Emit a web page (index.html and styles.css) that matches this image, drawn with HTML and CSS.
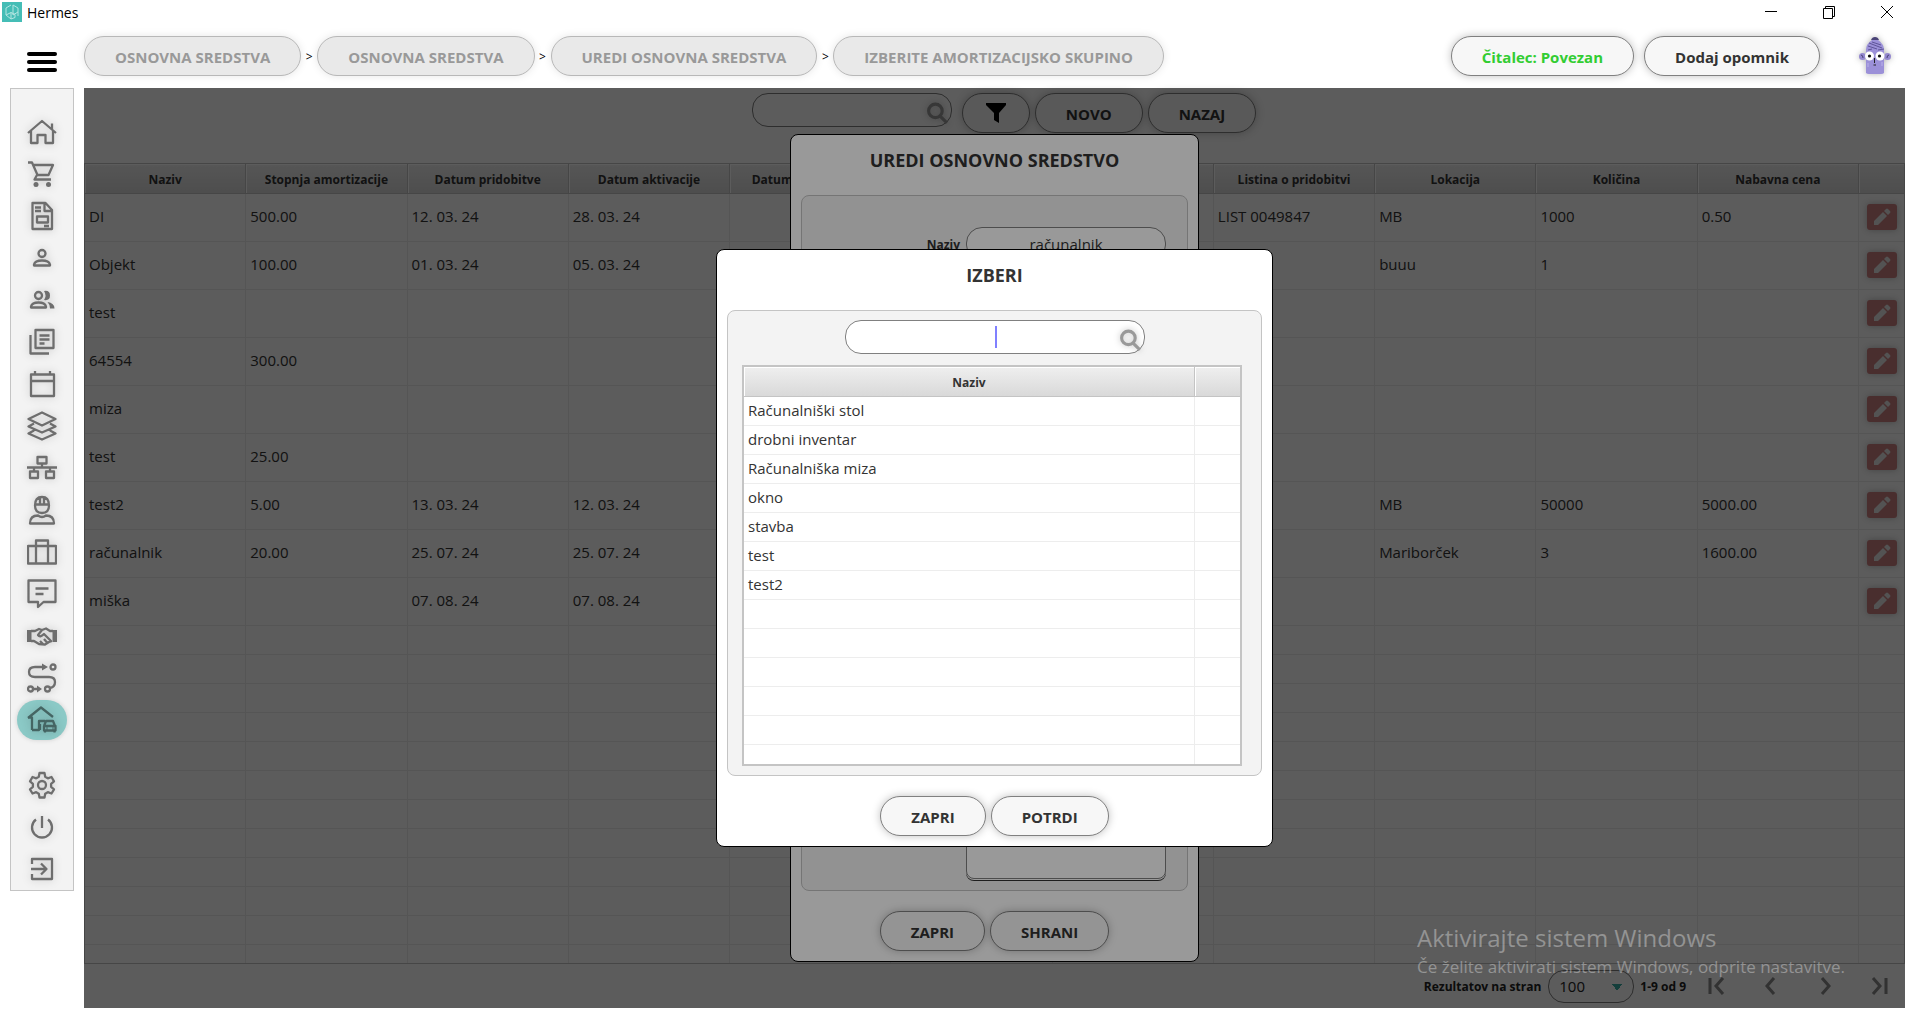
FILE: index.html
```html
<!DOCTYPE html>
<html lang="sl">
<head>
  <meta charset="UTF-8">
  <title>Hermes</title>
  <link rel="stylesheet" href="styles.css">
</head>
<body>

<header class="titlebar">
  <svg class="app-logo" viewBox="0 0 20 20">
    <rect width="20" height="20" fill="#45bdb6"/>
    <path d="M9 3L4 6v7l5 4V10.500L4 13M11 3l5 3v8M11 3v10l5-3M9 10.500l4 2v3l-4 1.500" fill="none" stroke="#b4e6e2" stroke-width="1"/>
  </svg>
  <span class="app-name">Hermes</span>
  <div class="window-buttons">
    <button aria-label="Pomanjšaj"><svg viewBox="0 0 14 14"><path d="M1 6.500h12"/></svg></button>
    <button aria-label="Obnovi"><svg viewBox="0 0 14 14"><path d="M1.500 3.500h9v10h-9zM3.500 3.500v-2h9v10h-2"/></svg></button>
    <button aria-label="Zapri okno"><svg viewBox="0 0 14 14"><path d="M1 1l12 12M13 1L1 13"/></svg></button>
  </div>
</header>

<div class="topbar">
  <button class="menu-toggle" aria-label="Meni"><span></span><span></span><span></span></button>
  <nav class="breadcrumbs">
    <button class="pill" disabled>OSNOVNA SREDSTVA</button>
    <span>&gt;</span>
    <button class="pill" disabled>OSNOVNA SREDSTVA</button>
    <span>&gt;</span>
    <button class="pill" disabled>UREDI OSNOVNA SREDSTVA</button>
    <span>&gt;</span>
    <button class="pill" disabled>IZBERITE AMORTIZACIJSKO SKUPINO</button>
  </nav>
  <div class="top-actions">
    <button class="pill connected">Čitalec: Povezan</button>
    <button class="pill">Dodaj opomnik</button>
    <button class="avatar" aria-label="Uporabnik">
      <svg viewBox="0 0 32 38">
        <circle cx="3.500" cy="19.500" r="3.500" fill="#9488cf"/>
        <circle cx="28.500" cy="19.500" r="3.500" fill="#9488cf"/>
        <path d="M2 18q2 0 2 3M30 18q-2 0-2 3" fill="none" stroke="#4a4377"/>
        <path d="M7 36V13q0-6 6-10h6q6 4 6 10v23q-1 1-3 1H10q-2 0-3-1z" fill="#9b90d8"/>
        <path d="M12 3q1-3 4-3t4 3z" fill="#4a4377"/>
        <path d="M10 6l13 5M9 9l9 3M13 5l9 3M19 13l6-1M9 13l4-1" stroke="#5f5599" stroke-width="1"/>
        <circle cx="10.500" cy="19" r="4.500" fill="#fff"/>
        <circle cx="21" cy="19" r="4.500" fill="#fff"/>
        <circle cx="10.500" cy="19" r="1.600" fill="#111"/>
        <circle cx="20.500" cy="19" r="1.600" fill="#111"/>
        <path d="M15.500 21v5M14.500 28h2.500" stroke="#222" stroke-width="1"/>
        <path d="M9 26v4M23 25v4" stroke="#b9b0ea" stroke-width="1"/>
      </svg>
    </button>
  </div>
</div>

<div class="layout">
  <nav class="sidebar">
    <a href="#" aria-label="Domov"><svg viewBox="0 0 30 30"><path d="M1 16L15 4l14 12M4 14v12h6.500v-8h8v8H26V14M25 12V6.500"/></svg></a>
    <a href="#" aria-label="Prodaja"><svg viewBox="0 0 30 30"><path d="M1 3.500h4l5.500 12.500h11L26 6H6.500M10 16l-2.500 4.500H24"/><circle class="solid" cx="9" cy="25.500" r="2.500"/><circle class="solid" cx="21.500" cy="25.500" r="2.500"/></svg></a>
    <a href="#" aria-label="Dokumenti"><svg viewBox="0 0 30 30"><path d="M5.500 2h13l6.500 7v19H5.500zM17.500 2v8H25M8 6.500h6M8 10h6M10 15.500h11v6H10zM17 25h5"/></svg></a>
    <a href="#" aria-label="Stranka"><svg viewBox="0 0 30 30"><circle cx="15" cy="10.500" r="3.500"/><path d="M7 22.500v-1q1-4 8-4t8 4v1z"/></svg></a>
    <a href="#" aria-label="Stranke"><svg viewBox="0 0 30 30"><circle cx="11.500" cy="10.500" r="3.500"/><path d="M4 22.500v-1q1-4 7.500-4t7.500 4v1z"/><path class="solid" d="M17 6q6-1 6 4.500T17 15q3-4.500 0-9zM20.500 17q7 1 7 6.500H23q0-4-2.500-6.500z"/></svg></a>
    <a href="#" aria-label="Katalog"><svg viewBox="0 0 30 30"><path d="M8.500 3h18v18h-18zM3.500 8v18.500H22M12.500 8.500h10M12.500 12.500h10M12.500 16.500h5"/></svg></a>
    <a href="#" aria-label="Koledar"><svg viewBox="0 0 30 30"><path d="M4 5.500h23V27H4zM4 12h23M8 2v4M23 2v4"/></svg></a>
    <a href="#" aria-label="Zaloga"><svg viewBox="0 0 30 30"><path d="M15 1.500L28.500 8 15 14.500 1.500 8zM7 12.500l-5.500 3L15 21.500l13.500-6-5.500-3M7 19.500L1.500 22.500 15 28.500l13.500-6-5.500-3"/></svg></a>
    <a href="#" aria-label="Organizacija"><svg viewBox="0 0 30 30"><path d="M10.500 4h9v6.500h-9zM0 14.500h30M15 10.500v4M7 14.500v4M23 14.500v4M3 18.500h8v6.500H3zM19 18.500h8v6.500h-8z"/></svg></a>
    <a href="#" aria-label="Delavci"><svg viewBox="0 0 30 30"><path d="M8 10.500q0-8.500 7-8.500t7 8.500q0 7.500-7 7.500t-7-7.500zM7.500 9.500h15M13 3v6M17 3v6M3 28.500q0-8 8-8 4 3 8 0 8 0 8 8z"/></svg></a>
    <a href="#" aria-label="Potovanja"><svg viewBox="0 0 30 30"><path d="M1 9h28v17.500H1zM9 26.500V3.500h12v23"/></svg></a>
    <a href="#" aria-label="Sporočila"><svg viewBox="0 0 30 30"><path d="M1.500 1.500h27V23h-12L11 28v-5H1.500zM8.500 9.500h13M8.500 15h8"/></svg></a>
    <a href="#" aria-label="Partnerji"><svg viewBox="0 0 30 30"><path class="solid" d="M0 9h4.500v12H0zM25.500 9H30v12h-4.500z"/><path d="M4 10h4l4-2 3 1 4-1.500L23 10h3M4 20h3l5 3 6 .5 4-2.500 3-1M15 9l-4 5q2 3 6-1l7 7M13 20l3 3M17 18l3 3.500"/></svg></a>
    <a href="#" aria-label="Procesi"><svg viewBox="0 0 30 30"><path d="M18 4H8q-6 0-6 5t6 5h14q6 0 6 5t-5 6M6 26h6"/><circle cx="26" cy="4" r="2.500"/><circle cx="3.500" cy="26" r="2.500"/><circle cx="20.500" cy="26" r="2.500"/><path class="solid" d="M15 .5L21 4l-6 3.500zM10 22.500l5 3.500-5 3.500z"/></svg></a>
    <a href="#" class="active" aria-label="Osnovna sredstva"><svg viewBox="0 0 30 30"><path d="M1 13L14 2.500 26 12M1 12.500h4V25M5 25h7v-9h6M13 25v-6"/><path d="M17 21l2-5h7l2 5M17 21h11.500v4.500H17zM18 25.500v2M27.500 25.500v2M19.500 23h1M25.500 23h1"/></svg></a>
    <a href="#" class="settings" aria-label="Nastavitve"><svg viewBox="0 0 30 30"><path d="M12.500 3h5l.7 3.800 2.600 1.500 3.700-1.300 2.500 4.300-2.900 2.500v3l2.900 2.500-2.500 4.200-3.700-1.300-2.600 1.500-.7 3.800h-5l-.7-3.800-2.600-1.500-3.700 1.300L3 19.300l2.900-2.500v-3L3 11.300 5.500 7l3.700 1.300 2.600-1.500z"/><circle cx="15" cy="15" r="4"/></svg></a>
    <a href="#" aria-label="Izklop"><svg viewBox="0 0 30 30"><path d="M15 4v12M9 7.500A10 10 0 1 0 21 7.500"/></svg></a>
    <a href="#" aria-label="Odjava"><svg viewBox="0 0 30 30"><path d="M5 10V5h20v20H5v-5M4 15h14M14 9.500l5.500 5.500-5.500 5.500"/></svg></a>
  </nav>

  <main class="content">
    <div class="toolbar">
      <div class="search">
        <input type="text" aria-label="Iskanje">
        <svg viewBox="0 0 22 22"><circle cx="9" cy="8.500" r="6.500"/><path d="M13 13l7 7"/></svg>
      </div>
      <button class="pill filter" aria-label="Filter"><svg viewBox="0 0 20 20"><path d="M0 0h20v2l-7 8v10l-5-3v-7L0 2z"/></svg></button>
      <button class="pill">NOVO</button>
      <button class="pill">NAZAJ</button>
    </div>

    <div class="table-wrap">
      <table class="grid assets">
        <thead>
          <tr>
            <th>Naziv</th><th>Stopnja amortizacije</th><th>Datum pridobitve</th><th>Datum aktivacije</th><th>Datum deaktivacije</th><th>Dobavitelj</th><th>Inventarna</th><th>Listina o pridobitvi</th><th>Lokacija</th><th>Količina</th><th>Nabavna cena</th><th class="edit-col"></th>
          </tr>
        </thead>
        <tbody id="assets"></tbody>
      </table>
    </div>

    <footer class="pager">
      <label for="pageSize">Rezultatov na stran</label>
      <select id="pageSize"><option>100</option></select>
      <span>1-9 od 9</span>
      <button aria-label="Prva stran"><svg viewBox="0 0 18 18"><path d="M2 1v16M15 1L8 9l7 8"/></svg></button>
      <button aria-label="Prejšnja stran"><svg viewBox="0 0 18 18"><path d="M12 1L5 9l7 8"/></svg></button>
      <button aria-label="Naslednja stran"><svg viewBox="0 0 18 18"><path d="M6 1l7 8-7 8"/></svg></button>
      <button aria-label="Zadnja stran"><svg viewBox="0 0 18 18"><path d="M3 1l7 8-7 8M16 1v16"/></svg></button>
    </footer>

    <div class="backdrop">
      <section class="modal asset-modal">
        <h2>UREDI OSNOVNO SREDSTVO</h2>
        <form class="panel">
          <div class="field">
            <label for="assetName">Naziv</label>
            <input id="assetName" type="text" value="računalnik">
          </div>
          <div class="field">
            <textarea aria-label="Opombe"></textarea>
          </div>
        </form>
        <div class="modal-buttons">
          <button class="pill">ZAPRI</button>
          <button class="pill">SHRANI</button>
        </div>
      </section>
    </div>

    <div class="backdrop">
      <section class="modal pick-modal">
        <h2>IZBERI</h2>
        <div class="panel">
          <div class="search">
            <input type="text" aria-label="Iskanje skupine">
            <span class="caret"></span>
            <svg viewBox="0 0 22 22"><circle cx="9" cy="8.500" r="6.500"/><path d="M13 13l7 7"/></svg>
          </div>
          <div class="table-wrap">
            <table class="grid groups">
              <thead><tr><th>Naziv</th><th class="mark-col"></th></tr></thead>
              <tbody id="groups"></tbody>
            </table>
          </div>
        </div>
        <div class="modal-buttons">
          <button class="pill">ZAPRI</button>
          <button class="pill">POTRDI</button>
        </div>
      </section>
    </div>
  </main>
</div>

<div class="watermark">
  <p class="watermark-title">Aktivirajte sistem Windows</p>
  <p>Če želite aktivirati sistem Windows, odprite nastavitve.</p>
</div>

<script src="script.js"></script>
</body>
</html>
```
FILE: styles.css
```css
* {
  box-sizing: border-box;
}

body {
  margin: 0;
  height: 100vh;
  display: flex;
  flex-direction: column;
  overflow: hidden;
  background: #fff;
  color: #333;
  font-family: "Open Sans", "Noto Sans", sans-serif;
  font-size: 15px;
}

button, input, select, textarea {
  font: inherit;
  color: inherit;
}

button {
  padding: 0;
  border: none;
  background: none;
}

/* Title bar */
.titlebar {
  display: flex;
  align-items: center;
  height: 24px;
  padding: 0 26px 0 2px;
  color: #000;
}

.app-logo {
  width: 20px;
  height: 20px;
}

.app-name {
  margin-left: 5px;
  font-size: 14px;
}

.window-buttons {
  display: flex;
  gap: 44px;
  margin-left: auto;
}

.window-buttons button {
  display: flex;
}

.window-buttons svg {
  width: 14px;
  height: 14px;
  fill: none;
  stroke: #000;
  stroke-width: 1;
}

/* Top bar */
.topbar {
  display: flex;
  align-items: center;
  height: 64px;
  padding-right: 29px;
}

.menu-toggle {
  display: flex;
  flex-direction: column;
  gap: 4px;
  width: 30px;
  margin: 12px 27px 0 27px;
}

.menu-toggle span {
  height: 4px;
  border-radius: 2px;
  background: #000;
}

.pill {
  height: 40px;
  padding: 2px 30px 0;
  border: 1px solid #808080;
  border-radius: 20px;
  background: #f7f7f7;
  box-shadow: 0 0 8px rgba(0, 0, 0, 0.25);
  font-weight: bold;
  white-space: nowrap;
}

.pill:disabled {
  border-color: #b8b8b8;
  background: #e9e9e9;
  box-shadow: 0 0 8px rgba(0, 0, 0, 0.1);
  color: #999;
}

.breadcrumbs {
  display: flex;
  align-items: center;
}

.breadcrumbs span {
  width: 16px;
  text-align: center;
  font-size: 12px;
  color: #000;
}

.top-actions {
  display: flex;
  align-items: center;
  gap: 10px;
  margin-left: auto;
}

.connected {
  color: #32cd32;
}

.avatar {
  display: flex;
  margin-left: 29px;
  filter: drop-shadow(0 0 3px rgba(0, 0, 0, 0.3));
}

.avatar svg {
  width: 32px;
  height: 38px;
}

/* Sidebar */
.layout {
  flex: 1;
  display: flex;
  align-items: flex-start;
  gap: 10px;
  min-height: 0;
  padding: 0 15px 19px 10px;
}

.sidebar {
  display: flex;
  flex-direction: column;
  align-items: center;
  gap: 2px;
  width: 64px;
  padding: 23px 0 1px;
  border: 1px solid #c4c4c4;
  background: #f3f3f3;
}

.sidebar a {
  display: flex;
  align-items: center;
  justify-content: center;
  width: 50px;
  height: 40px;
  border-radius: 20px;
}

.sidebar svg {
  width: 30px;
  height: 30px;
  fill: none;
  stroke: #6e6e6e;
  stroke-width: 2.3;
  stroke-linejoin: round;
  filter: drop-shadow(0 0 4px rgba(0, 0, 0, 0.2));
}

.sidebar .solid {
  fill: #6e6e6e;
  stroke: none;
}

.sidebar .active {
  background: #8bc9c6;
  box-shadow: 0 0 5px rgba(0, 0, 0, 0.15);
}

.sidebar .active svg {
  stroke: #456563;
}

.sidebar .settings {
  margin-top: 23px;
}

/* Content */
.content {
  position: relative;
  flex: 1;
  align-self: stretch;
  display: flex;
  flex-direction: column;
  min-width: 0;
}

.toolbar {
  display: flex;
  align-items: flex-start;
  justify-content: center;
  gap: 5px;
  height: 75px;
  padding-top: 5px;
  padding-left: 19px;
}

.toolbar .filter {
  margin-left: 5px;
  padding: 0 23px;
}

.filter svg {
  display: block;
  width: 20px;
  height: 20px;
}

.search {
  position: relative;
  width: 200px;
  height: 34px;
}

.search input {
  width: 100%;
  height: 100%;
  border: 1px solid #808080;
  border-radius: 16px;
  background: #fff;
  text-align: center;
}

.search svg {
  position: absolute;
  right: 3px;
  bottom: 2px;
  width: 23px;
  height: 23px;
  fill: none;
  stroke: #999;
  stroke-width: 3;
  filter: drop-shadow(0 0 3px rgba(0, 0, 0, 0.25));
}

.caret {
  position: absolute;
  left: 50%;
  top: 6px;
  width: 2px;
  height: 22px;
  background: #8080ff;
}

.table-wrap {
  flex: 1;
  min-height: 0;
  overflow: hidden;
  border: 1px solid #c4c4c4;
  background: #fff;
}

.grid {
  width: 100%;
  table-layout: fixed;
  border-collapse: separate;
  border-spacing: 0;
}

.grid th {
  height: 30px;
  padding: 2px 0 0;
  border-right: 1px solid #c4c4c4;
  border-bottom: 1px solid #c4c4c4;
  background: linear-gradient(#efefef, #d9d9d9);
  box-shadow: inset 1px 1px #fff;
  font-size: 12px;
}

.grid td {
  height: 29px;
  padding: 0 4px 2px;
  border-right: 1px solid #ededed;
  border-bottom: 1px solid #ededed;
  white-space: nowrap;
}

.grid th:last-child,
.grid td:last-child {
  border-right: none;
}

.assets .filled td {
  height: 48px;
  padding-bottom: 4px;
}

.assets .filled td:last-child {
  padding-bottom: 2px;
}

.edit-col {
  width: 45px;
}

.edit {
  display: flex;
  align-items: center;
  justify-content: center;
  width: 30px;
  height: 26px;
  margin-left: 4px;
  border-radius: 3px;
  background: #cd8080;
  box-shadow: 0 0 6px rgba(0, 0, 0, 0.25);
}

.edit svg {
  width: 18px;
  height: 18px;
  fill: #e6e6e6;
}

/* Pager */
.pager {
  display: flex;
  align-items: center;
  justify-content: flex-end;
  height: 44px;
  padding-right: 17px;
  color: #222;
  font-size: 12px;
  font-weight: bold;
}

.pager select {
  width: 86px;
  height: 33px;
  margin: 0 6px 0 7px;
  padding: 0 10px;
  border: 1px solid #808080;
  border-radius: 16px;
  appearance: none;
  background: linear-gradient(to bottom right, #39aea6 50%, transparent 50%) 68px 13px / 5px 7px no-repeat,
    linear-gradient(to bottom left, #39aea6 50%, transparent 50%) 63px 13px / 5px 7px no-repeat, #fff;
  font-size: 15px;
  font-weight: normal;
}

.pager button {
  display: flex;
  margin-left: 36px;
}

.pager span + button {
  margin-left: 22px;
}

.pager svg {
  width: 18px;
  height: 18px;
  fill: none;
  stroke: #8c8c8c;
  stroke-width: 3;
}

/* Dialogs */
.backdrop {
  position: absolute;
  inset: 0;
  display: flex;
  align-items: center;
  justify-content: center;
  background: rgba(0, 0, 0, 0.4);
}

.modal {
  display: flex;
  flex-direction: column;
  padding: 0 10px 10px;
  border: 1px solid #000;
  border-radius: 8px;
  background: #fff;
}

.asset-modal {
  width: 409px;
  height: 90%;
}

.pick-modal {
  width: 557px;
  height: 65%;
}

.modal h2 {
  margin: 0;
  height: 60px;
  padding-top: 12px;
  font-size: 18px;
  line-height: 26px;
  text-align: center;
}

.panel {
  flex: 1;
  display: flex;
  flex-direction: column;
  min-height: 0;
  border: 1px solid #c4c4c4;
  border-radius: 8px;
  background: #f3f3f3;
}

.asset-modal .panel {
  justify-content: space-between;
  padding: 31px 21px 11px;
}

.field {
  display: flex;
  align-items: center;
  justify-content: flex-end;
  gap: 6px;
}

.field label {
  font-size: 12px;
  font-weight: bold;
}

.field input,
.field textarea {
  width: 200px;
  height: 34px;
  border: 1px solid #808080;
  border-radius: 16px;
  background: #fff;
  text-align: center;
}

.field textarea {
  height: 80px;
  border-radius: 8px;
  box-shadow: 0 1px #fff, 0 2px #333;
  resize: none;
}

.pick-modal .panel {
  gap: 11px;
  padding: 9px 14px;
}

.pick-modal .search {
  align-self: center;
  width: 300px;
}

.pick-modal .table-wrap {
  margin-right: 5px;
  border-width: 2px;
}

.mark-col {
  width: 45px;
}

.modal-buttons {
  display: flex;
  justify-content: center;
  gap: 5px;
  padding-top: 20px;
}

/* System notice lying over the window */
.watermark {
  position: absolute;
  right: 75px;
  bottom: 48px;
  color: rgba(255, 255, 255, 0.35);
  pointer-events: none;
}

.watermark p {
  margin: 0;
  font-size: 17px;
  line-height: 24px;
}

.watermark .watermark-title {
  font-size: 24px;
  line-height: 34px;
}
```
FILE: script.js
```javascript
// stolpci: naziv, stopnja, pridobitev, aktivacija, listina, lokacija, količina, cena
const assets = [
  ["DI", "500.00", "12. 03. 24", "28. 03. 24", "LIST 0049847", "MB", "1000", "0.50"],
  ["Objekt", "100.00", "01. 03. 24", "05. 03. 24", "", "buuu", "1", ""],
  ["test", "", "", "", "", "", "", ""],
  ["64554", "300.00", "", "", "", "", "", ""],
  ["miza", "", "", "", "", "", "", ""],
  ["test", "25.00", "", "", "", "", "", ""],
  ["test2", "5.00", "13. 03. 24", "12. 03. 24", "", "MB", "50000", "5000.00"],
  ["računalnik", "20.00", "25. 07. 24", "25. 07. 24", "", "Mariborček", "3", "1600.00"],
  ["miška", "", "07. 08. 24", "07. 08. 24", "", "", "", ""]
];

const groups = ["Računalniški stol", "drobni inventar", "Računalniška miza", "okno", "stavba", "test", "test2"];

const editButton = '<button class="edit" aria-label="Uredi"><svg viewBox="0 0 18 18"><path d="M1 17v-4L10 4l4 4-9 9zM11 3l2-2q1-1 2 0l2 2q1 1 0 2l-2 2z"/></svg></button>';

function row(cells, className) {
  return `<tr class="${className}">` + cells.map(c => `<td>${c}</td>`).join("") + "</tr>";
}

function emptyRows(count, columns) {
  return row(Array(columns).fill(""), "empty").repeat(count);
}

document.getElementById("assets").innerHTML =
  assets.map(a => row([...a.slice(0, 4), "", "", "", ...a.slice(4), editButton], "filled")).join("") + emptyRows(12, 12);

document.getElementById("groups").innerHTML =
  groups.map(g => row([g, ""], "")).join("") + emptyRows(7, 2);
```
